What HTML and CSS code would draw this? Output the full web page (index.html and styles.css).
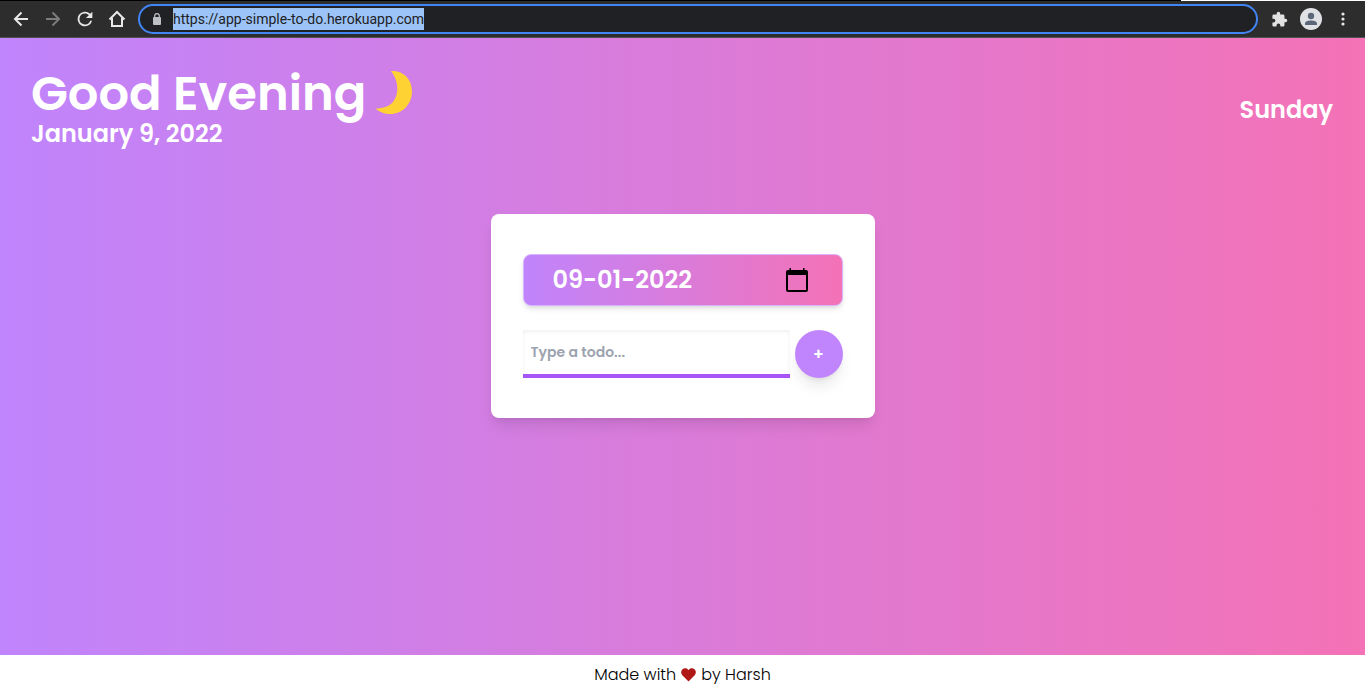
FILE: index.html
```html
<!DOCTYPE html>
<html lang="en">
<head>
<meta charset="utf-8">
<meta name="viewport" content="width=device-width, initial-scale=1">
<title>Simple To Do</title>
<link rel="stylesheet" href="styles.css">
</head>
<body>
<nav class="toolbar" aria-label="Browser">
  <button class="tool" type="button" aria-label="Back"><svg width="24" height="24" viewBox="0 0 24 24" fill="none" stroke="#e8e8e8" stroke-width="2"><path d="M19 12H6M12.500 5.500L6 12l6.500 6.500"/></svg></button>
  <button class="tool" type="button" aria-label="Forward"><svg width="24" height="24" viewBox="0 0 24 24" fill="none" stroke="#7c7c7c" stroke-width="2"><path d="M5 12h13M11.500 5.500L18 12l-6.500 6.500"/></svg></button>
  <button class="tool" type="button" aria-label="Reload"><svg width="22" height="22" viewBox="0 0 24 24" fill="#e8e8e8"><path d="M17.650 6.350A8 8 0 1 0 19.730 14h-2.080A6 6 0 1 1 12 6c1.660 0 3.140.69 4.220 1.780L13 11h7V4z"/></svg></button>
  <button class="tool" type="button" aria-label="Home"><svg width="24" height="24" viewBox="0 0 24 24" fill="none" stroke="#e8e8e8" stroke-width="2"><path d="M4.500 12.500L12 5l7.500 7.500M7 11v8h10v-8"/></svg></button>
  <div class="address">
    <svg class="lock" width="10" height="12" viewBox="0 0 10 12"><rect x="1" y="4" width="8" height="8" rx="1" fill="#bdc1c6"/><path d="M2.700 5V3a2.300 2.300 0 0 1 4.600 0v2" fill="none" stroke="#bdc1c6" stroke-width="1.200"/></svg>
    <a class="url" href="https://app-simple-to-do.herokuapp.com">https://app-simple-to-do.herokuapp.com</a>
  </div>
  <button class="tool" type="button" aria-label="Extensions"><svg width="17" height="17" viewBox="0 0 24 24" fill="#e2e2e2"><path d="M20.500 11H19V7a2 2 0 0 0-2-2h-4V3.500a2.500 2.500 0 0 0-5 0V5H4a2 2 0 0 0-2 2v3.800h1.500a2.700 2.700 0 0 1 0 5.400H2V20a2 2 0 0 0 2 2h3.800v-1.500a2.700 2.700 0 0 1 5.400 0V22H17a2 2 0 0 0 2-2v-4h1.500a2.500 2.500 0 0 0 0-5z"/></svg></button>
  <button class="tool" type="button" aria-label="Profile"><svg width="22" height="22" viewBox="0 0 22 22"><circle cx="11" cy="11" r="11" fill="#dfe1e5"/><g fill="#5b6678"><circle cx="11" cy="8" r="3.200"/><path d="M5 17v-1.500C5 13.300 8.500 12.500 11 12.500s6 .8 6 3V17z"/></g></svg></button>
  <button class="tool" type="button" aria-label="Menu"><svg width="24" height="24" viewBox="0 0 24 24" fill="#e8e8e8"><circle cx="12" cy="7" r="1.600"/><circle cx="12" cy="12" r="1.600"/><circle cx="12" cy="17" r="1.600"/></svg></button>
</nav>
<main class="app">
  <header class="header">
    <div>
      <h1 class="greeting">Good Evening
        <svg class="moon" width="38" height="44" viewBox="0 0 38 44" role="img" aria-label="Moon"><path d="M16 1C28 0 37 9 37 21.500 37 34 27.500 44 15.500 44 9.500 44 4 42 .5 38.500c8 0 14-2.300 17.500-6.500C25 23.500 23 9.500 16 1z" fill="#ffd234"/></svg>
      </h1>
      <p class="subhead">January 9, 2022</p>
    </div>
    <p class="subhead">Sunday</p>
  </header>
  <form class="card">
    <div class="date-field">
      <input class="date-input" type="text" aria-label="Date" value="09-01-2022">
      <button class="date-button" type="button" aria-label="Open calendar"><svg width="24" height="24" viewBox="0 0 24 24"><path d="M4.500 0H6v2h12V0h1.500v2H21q2 0 2 2v18q0 2-2 2H3q-2 0-2-2V4q0-2 2-2h1.500zM3 7v15h18V7z" fill="#000" fill-rule="evenodd"/></svg></button>
    </div>
    <div class="todo-row">
      <input class="todo-input" type="text" aria-label="Todo" placeholder="Type a todo...">
      <button class="add" type="submit" aria-label="Add todo">+</button>
    </div>
  </form>
</main>
<footer class="footer">
  <span>Made with</span>
  <svg width="15" height="14" viewBox="0 0 15 14" role="img" aria-label="love"><path d="M7.500 13.500L1.300 7.200C-.3 5.500-.2 2.800 1.500 1.300 3.200-.1 5.600.1 7.100 1.700l.4.400.4-.4C9.400.1 11.800-.1 13.500 1.300c1.700 1.500 1.800 4.200.2 5.900z" fill="#b01717"/></svg>
  <span>by Harsh</span>
</footer>
</body>
</html>
```
FILE: styles.css
```css
* {
  box-sizing: border-box;
}

body {
  display: flex;
  flex-direction: column;
  min-height: 100vh;
  margin: 0;
  font-family: Poppins, Inter, sans-serif;
}

h1,
p {
  margin: 0;
}

button,
input {
  padding: 0;
  border: 0;
  background: none;
  font-family: inherit;
}

svg {
  display: block;
}

.toolbar {
  display: flex;
  align-items: center;
  gap: 8px;
  height: 38px;
  padding: 1px 10px 0 9px;
  border-bottom: 1px solid #505050;
  background:
    linear-gradient(to left, #fff 184px, #000 184px) top / 100% 1px no-repeat,
    #2d2d2d;
}

.tool {
  display: flex;
  flex: none;
  align-items: center;
  justify-content: center;
  width: 24px;
  height: 24px;
}

.address {
  display: flex;
  flex: 1;
  align-items: center;
  gap: 11px;
  height: 30px;
  margin: 0 1px;
  padding-left: 12px;
  border: 2px solid #4285f4;
  border-radius: 15px;
  background: #202124;
}

.url {
  background: #9dc4f8;
  color: #202124;
  font-family: "Segoe UI", Roboto, sans-serif;
  font-size: 14px;
  line-height: 22px;
  text-decoration: none;
}

.app {
  display: flex;
  flex: 1;
  flex-direction: column;
  align-items: center;
  gap: 64px;
  background: linear-gradient(to right, #c084fc, #f472b6);
}

.header {
  display: flex;
  align-items: center;
  justify-content: space-between;
  width: 100%;
  padding: 32px 32px 0 31px;
  color: #fff;
}

.greeting {
  display: flex;
  gap: 9px;
  font-size: 48px;
  font-weight: 600;
  line-height: 48px;
}

.subhead {
  font-size: 24px;
  font-weight: 600;
  line-height: 32px;
}

.card {
  display: flex;
  flex-direction: column;
  gap: 24px;
  width: 384px;
  max-width: 100%;
  padding: 40px 32px;
  border-radius: 8px;
  background: #fff;
  box-shadow: 0 10px 15px -3px rgb(0 0 0 / 10%), 0 4px 6px -4px rgb(0 0 0 / 10%);
}

.date-field {
  display: flex;
  align-items: center;
  height: 52px;
  padding: 0 33px 0 29px;
  border: 1px solid #d8b4fe;
  border-radius: 8px;
  background: linear-gradient(to right, #c084fc, #f472b6);
  box-shadow: 0 4px 6px -1px rgb(0 0 0 / 10%), 0 2px 4px -2px rgb(0 0 0 / 10%);
}

.date-input {
  flex: 1;
  min-width: 0;
  color: #fff;
  font-size: 24px;
  font-weight: 600;
  line-height: 32px;
}

.todo-row {
  display: flex;
  gap: 5px;
}

.todo-input {
  flex: 1;
  min-width: 0;
  height: 48px;
  padding: 0 8px;
  border-bottom: 4px solid #a855f7;
  box-shadow: inset 0 2px 4px rgb(0 0 0 / 6%);
  font-size: 14px;
  font-weight: 600;
}

.todo-input::placeholder {
  color: #9ca3af;
}

.add {
  width: 48px;
  height: 48px;
  border-radius: 50%;
  background: #c084fc;
  box-shadow: 0 10px 15px -3px rgb(0 0 0 / 10%), 0 4px 6px -4px rgb(0 0 0 / 10%);
  color: #fff;
  font-size: 16px;
  font-weight: 600;
}

.footer {
  display: flex;
  align-items: center;
  justify-content: center;
  gap: 5px;
  height: 40px;
  background: #fff;
  color: #000;
  font-size: 16px;
  font-weight: 300;
  line-height: 24px;
}
```
